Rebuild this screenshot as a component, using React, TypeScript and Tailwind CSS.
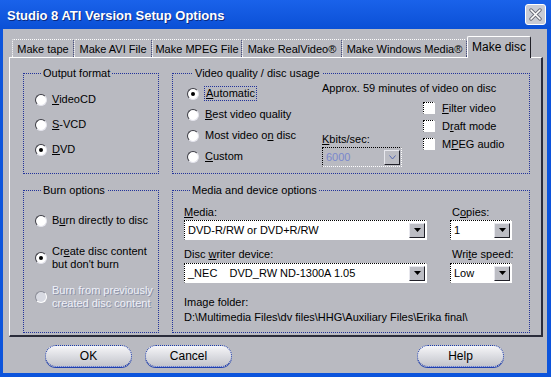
import React from "react";

const Radio = ({ checked = false, disabled = false }: { checked?: boolean; disabled?: boolean }) => (
  <span
    className={`w-[12px] h-[12px] shrink-0 rounded-full border flex items-center justify-center ${
      disabled
        ? "bg-[#d8dae2] border-t-[#8a8c96] border-l-[#8a8c96] border-r-white border-b-white"
        : "bg-white border-t-[#3c3c44] border-l-[#3c3c44] border-r-[#e4e4ec] border-b-[#e4e4ec]"
    }`}
  >
    {checked && <span className="w-[4px] h-[4px] rounded-full bg-black" />}
  </span>
);

const Check = () => (
  <span className="w-[12px] h-[12px] shrink-0 bg-white border border-dotted border-t-black border-l-black border-r-white border-b-white" />
);

const Arrow = ({ disabled = false }: { disabled?: boolean }) => (
  <span className="w-[16px] h-[15px] mr-[1px] bg-[#bcbdc4] border border-t-[#e8e8ee] border-l-[#e8e8ee] border-r-[#202028] border-b-[#202028] flex items-center justify-center">
    {disabled ? (
      <svg width="7" height="5" viewBox="0 0 7 5">
        <path d="M0.5 0.5 L3.5 4 L6.5 0.5" fill="none" stroke="#5868b0" strokeWidth="1" />
      </svg>
    ) : (
      <svg width="7" height="4" viewBox="0 0 7 4">
        <path d="M0 0 H7 L3.5 4 Z" fill="#000" />
      </svg>
    )}
  </span>
);

const Combo = ({ value, disabled = false }: { value: string; disabled?: boolean }) => (
  <div
    className={`h-[20px] flex items-center border border-dotted border-t-black border-l-black border-r-white border-b-white ${
      disabled ? "bg-[#b9bac1]" : "bg-white"
    }`}
  >
    <span className={`flex-1 pl-[3px] whitespace-pre leading-[14px] ${disabled ? "text-[#7a88cc]" : "text-black"}`}>
      {value}
    </span>
    <Arrow disabled={disabled} />
  </div>
);

const Group = ({ title, className, children }: { title: string; className: string; children: React.ReactNode }) => (
  <fieldset className={`border border-dotted border-[#22339a] ${className}`}>
    <legend className="ml-[6px] px-[2px] leading-[14px]">{title}</legend>
    {children}
  </fieldset>
);

const Btn = ({ label }: { label: string }) => (
  <button className="w-[87px] h-[22px] rounded-full border border-dotted border-[#1c3aa8] bg-gradient-to-b from-[#f6f6f8] via-[#dcdde2] to-[#c4c5cc] text-[12px] text-black flex items-center justify-center shadow-[0_1px_0_#2040b0]">
    {label}
  </button>
);

const tabs = [
  { label: "Make tape", w: "w-[62px]" },
  { label: "Make AVI File", w: "w-[78px]" },
  { label: "Make MPEG File", w: "w-[90px]" },
  { label: "Make RealVideo®", w: "w-[100px]" },
  { label: "Make Windows Media®", w: "w-[125px]" },
];

export default function App() {
  return (
    <div className="w-[551px] h-[377px] bg-[#0c54dc] flex flex-col font-['Liberation_Sans',Arial,sans-serif] text-[11px] text-black">
      <div className="h-[29px] shrink-0 flex items-center justify-between pl-[7px] pr-[5px] bg-gradient-to-b from-[#1a62ea] to-[#0a50d6]">
        <span className="text-white font-bold text-[13px] pt-[3px] [text-shadow:1px_1px_0_#0a2a80]">
          Studio 8 ATI Version Setup Options
        </span>
        <span className="w-[21px] h-[21px] rounded-[3px] border border-white bg-[#c8cbd4] flex items-center justify-center">
          <svg width="13" height="13" viewBox="0 0 13 13">
            <path d="M2 2 L11 11 M11 2 L2 11" stroke="#6a6c78" strokeWidth="3.4" strokeLinecap="round" />
            <path d="M2 2 L11 11 M11 2 L2 11" stroke="#fff" strokeWidth="1.6" strokeLinecap="round" />
          </svg>
        </span>
      </div>

      <div className="flex-1 ml-[3px] mr-[4px] mb-[4px] bg-[#b9bac1] flex flex-col pl-[6px] pr-[4px] pt-[7px]">
        <div className="h-[21px] flex items-end pl-[3px]">
          {tabs.map((t) => (
            <div
              key={t.label}
              className={`${t.w} h-[18px] shrink-0 flex items-center justify-center border-t border-l border-r border-t-white border-l-white border-r-[#28306a] border-dotted rounded-t-[2px] leading-[14px]`}
            >
              {t.label}
            </div>
          ))}
          <div className="w-[64px] h-[22px] -mb-px relative z-10 shrink-0 bg-[#b9bac1] flex items-center justify-center border-t border-l border-r border-t-white border-l-white border-r-[#202028] rounded-t-[2px] text-[12px] leading-[14px] pb-[2px]">
            Make disc
          </div>
        </div>

        <div className="h-[280px] border-t border-l border-r-2 border-b-2 border-t-white border-l-white border-r-[#2a2c3a] border-b-[#2a2c3a] pt-[8px] pl-[13px] grid grid-cols-[136px_358px] grid-rows-[108px_150px] gap-x-[13px] gap-y-[9px]">
          <Group title="Output format" className="pl-[11px] pt-[7px] flex flex-col">
            <label className="h-[25px] flex items-center gap-[5px]">
              <Radio />
              <span><u>V</u>ideoCD</span>
            </label>
            <label className="h-[25px] flex items-center gap-[5px]">
              <Radio />
              <span><u>S</u>-VCD</span>
            </label>
            <label className="h-[25px] flex items-center gap-[5px]">
              <Radio checked />
              <span><u>D</u>VD</span>
            </label>
          </Group>

          <Group title="Video quality / disc usage" className="pl-[14px] flex">
            <div className="w-[135px] pt-[3px] flex flex-col">
              <label className="h-[21px] flex items-center gap-[5px]">
                <Radio checked />
                <span className="border border-dotted border-[#22339a] px-[1px] leading-[13px]"><u>A</u>utomatic</span>
              </label>
              <label className="h-[21px] flex items-center gap-[6px]">
                <Radio />
                <span><u>B</u>est video quality</span>
              </label>
              <label className="h-[21px] flex items-center gap-[6px]">
                <Radio />
                <span>Most video o<u>n</u> disc</span>
              </label>
              <label className="h-[21px] flex items-center gap-[6px]">
                <Radio />
                <span><u>C</u>ustom</span>
              </label>
            </div>
            <div className="flex flex-col pt-[1px]">
              <div className="leading-[14px] whitespace-nowrap">Approx. 59 minutes of video on disc</div>
              <div className="flex">
                <div className="w-[101px] flex flex-col pt-[37px]">
                  <div className="leading-[14px]"><u>K</u>bits/sec:</div>
                  <div className="w-[80px] mt-[1px]">
                    <Combo value="6000" disabled />
                  </div>
                </div>
                <div className="flex flex-col pt-[4px]">
                  <label className="h-[18px] flex items-center gap-[7px]">
                    <Check />
                    <span><u>F</u>ilter video</span>
                  </label>
                  <label className="h-[18px] flex items-center gap-[7px]">
                    <Check />
                    <span>D<u>r</u>aft mode</span>
                  </label>
                  <label className="h-[18px] flex items-center gap-[7px]">
                    <Check />
                    <span>M<u>P</u>EG audio</span>
                  </label>
                </div>
              </div>
            </div>
          </Group>

          <Group title="Burn options" className="pl-[11px] pt-[17px] flex flex-col gap-[18px]">
            <label className="flex items-center gap-[5px] leading-[13px]">
              <Radio />
              <span>B<u>u</u>rn directly to disc</span>
            </label>
            <label className="flex items-center gap-[5px] leading-[13px]">
              <Radio checked />
              <span>
                Cr<u>e</u>ate disc content
                <br />
                but don't burn
              </span>
            </label>
            <label className="-mt-[5px] flex items-center gap-[5px] leading-[13px]">
              <Radio disabled />
              <span className="text-[#eef0f8] [text-shadow:1px_1px_0_#8a90a8]">
                Burn from previously
                <br />
                created disc content
              </span>
            </label>
          </Group>

          <Group title="Media and device options" className="pl-[11px] pt-[8px]">
            <div className="grid grid-cols-[243px_62px] gap-x-[23px]">
              <div className="leading-[14px]"><u>M</u>edia:</div>
              <div className="leading-[14px] pl-[2px] whitespace-nowrap">C<u>o</u>pies:</div>
              <div className="mt-[1px]">
                <Combo value="DVD-R/RW or DVD+R/RW" />
              </div>
              <div className="mt-[1px]">
                <Combo value="1" />
              </div>
              <div className="leading-[14px] mt-[7px] whitespace-nowrap">Disc <u>w</u>riter device:</div>
              <div className="leading-[14px] mt-[7px] pl-[2px] whitespace-nowrap">Wri<u>t</u>e speed:</div>
              <div className="mt-[2px]">
                <Combo value="_NEC    DVD_RW ND-1300A 1.05" />
              </div>
              <div className="mt-[2px]">
                <Combo value="Low" />
              </div>
              <div className="col-span-2 leading-[14px] mt-[12px]">Image folder:</div>
              <div className="col-span-2 leading-[14px] mt-[1px] whitespace-nowrap">
                D:\Multimedia Files\dv files\HHG\Auxiliary Files\Erika final\
              </div>
            </div>
          </Group>
        </div>

        <div className="mt-[8px] flex pl-[36px] pr-[39px]">
          <Btn label="OK" />
          <div className="w-[13px]" />
          <Btn label="Cancel" />
          <div className="flex-1" />
          <Btn label="Help" />
        </div>
      </div>
    </div>
  );
}
